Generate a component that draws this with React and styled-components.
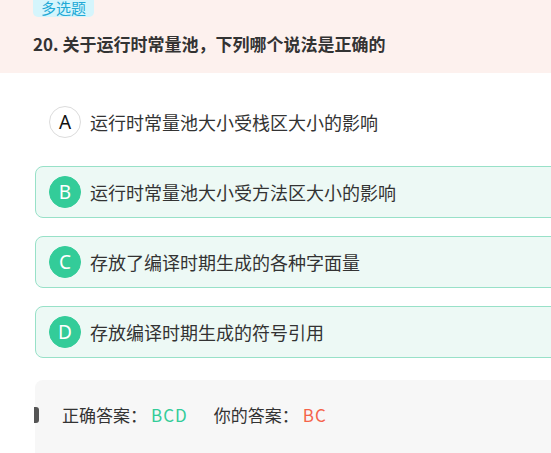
import styled, { createGlobalStyle } from 'styled-components';

const GlobalStyle = createGlobalStyle`
  html, body {
    margin: 0;
    padding: 0;
    background: #fff;
    overflow: hidden;
  }
  body {
    font-family: "Noto Sans CJK SC", "Noto Sans", sans-serif;
    color: #333;
  }
`;

const options = [
  { key: 'A', text: '运行时常量池大小受栈区大小的影响', picked: false },
  { key: 'B', text: '运行时常量池大小受方法区大小的影响', picked: true },
  { key: 'C', text: '存放了编译时期生成的各种字面量', picked: true },
  { key: 'D', text: '存放编译时期生成的符号引用', picked: true },
];

export default function App() {
  return (
    <>
      <GlobalStyle />
      <StPage>
        <StHeader>
          <StTag>多选题</StTag>
          <StTitle>20. 关于运行时常量池，下列哪个说法是正确的</StTitle>
        </StHeader>
        <StOptions>
          {options.map((opt) => (
            <StOption key={opt.key} $picked={opt.picked}>
              <StBadge $picked={opt.picked}>{opt.key}</StBadge>
              <StOptionText>{opt.text}</StOptionText>
            </StOption>
          ))}
        </StOptions>
        <StSummary>
          <StKnob />
          <span>正确答案：</span>
          <StRight>BCD</StRight>
          <span>你的答案：</span>
          <StWrong>BC</StWrong>
        </StSummary>
      </StPage>
    </>
  );
}

const StPage = styled.div`
  width: 620px;
  display: flex;
  flex-direction: column;
`;

const StHeader = styled.div`
  background: #fdf1ee;
  padding: 0 33px 17px;
  display: flex;
  flex-direction: column;
  align-items: flex-start;
`;

const StTag = styled.div`
  margin-top: -7px;
  height: 24px;
  line-height: 30px;
  padding: 0 8px;
  border-radius: 5px;
  background: #d5f5fc;
  color: #22a9d6;
  font-size: 15px;
`;

const StTitle = styled.h2`
  margin: 15px 0 0;
  font-size: 17px;
  line-height: 24px;
  font-weight: 700;
  color: #333;
`;

const StOptions = styled.div`
  display: flex;
  flex-direction: column;
  gap: 18px;
  padding: 23px 0 0 35px;
`;

const StOption = styled.div`
  display: flex;
  align-items: center;
  gap: 9px;
  height: 52px;
  box-sizing: border-box;
  padding: 0 13px;
  border-radius: 8px;
  border: 1px solid ${(p) => (p.$picked ? '#98e1c8' : 'transparent')};
  background: ${(p) => (p.$picked ? '#edf9f5' : '#fff')};
`;

const StBadge = styled.div`
  width: 32px;
  height: 32px;
  box-sizing: border-box;
  border-radius: 50%;
  display: flex;
  align-items: center;
  justify-content: center;
  font-size: 19px;
  font-family: "Noto Sans", sans-serif;
  color: ${(p) => (p.$picked ? '#fff' : '#111')};
  background: ${(p) => (p.$picked ? '#33cc99' : '#fff')};
  border: 1px solid ${(p) => (p.$picked ? '#33cc99' : '#dcdcdc')};
`;

const StOptionText = styled.span`
  font-size: 18px;
  color: #333;
`;

const StSummary = styled.div`
  position: relative;
  margin: 22px 0 0 35px;
  height: 120px;
  box-sizing: border-box;
  padding: 23px 0 0 27px;
  background: #f7f7f7;
  border-radius: 8px 0 0 0;
  display: flex;
  align-items: flex-start;
  font-size: 17px;
  line-height: 24px;
  color: #333;
`;

const StKnob = styled.div`
  position: absolute;
  left: -1px;
  top: 27px;
  width: 5px;
  height: 16px;
  border-radius: 0 3px 3px 0;
  background: #555;
`;

const StRight = styled.span`
  color: #33cc99;
  margin: 0 26px 0 4px;
  letter-spacing: 1px;
`;

const StWrong = styled.span`
  color: #f5634a;
  margin-left: 4px;
  letter-spacing: 1px;
`;
